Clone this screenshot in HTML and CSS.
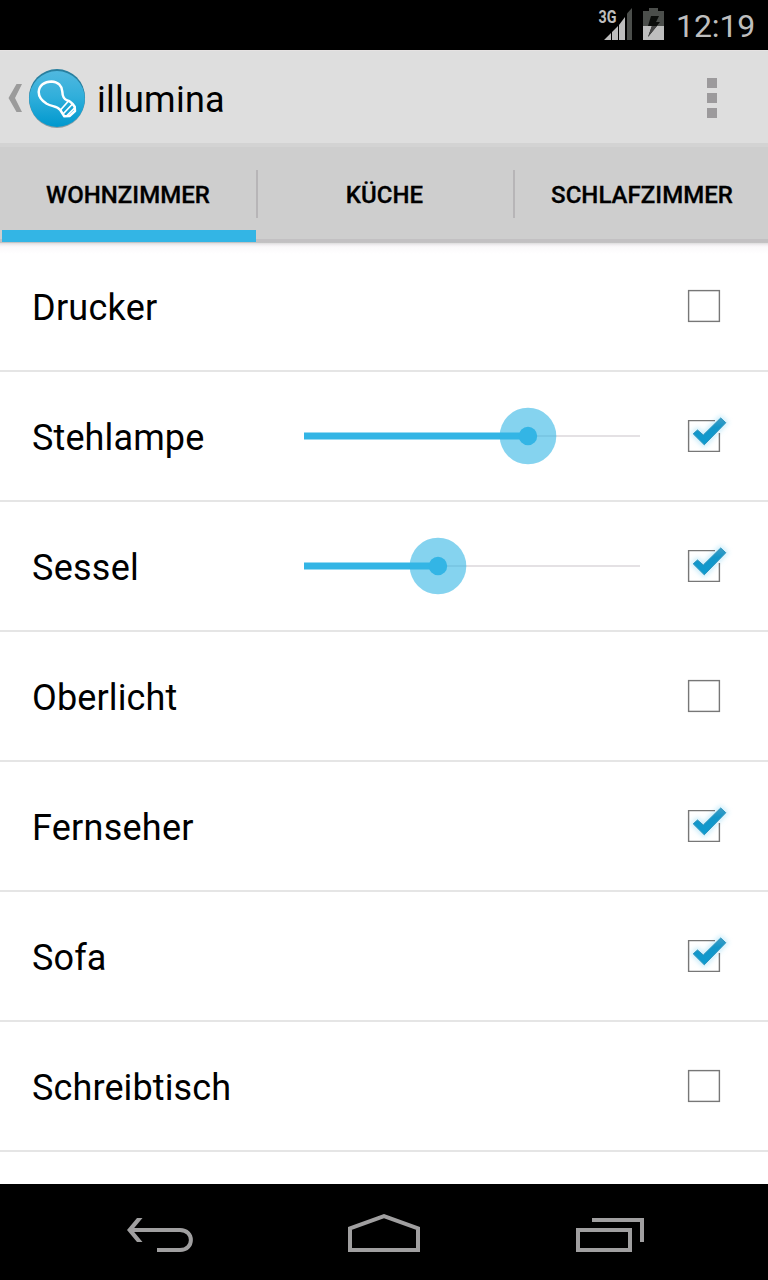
FILE: index.html
```html
<!DOCTYPE html>
<html lang="de">
<head>
<meta charset="utf-8">
<title>illumina</title>
<link rel="stylesheet" href="styles.css">
</head>
<body>
<svg width="0" height="0" class="defs">
  <defs>
    <linearGradient id="tick" x1="0" y1="0" x2="0" y2="1"><stop offset="0" stop-color="#3f9cc4"/><stop offset=".35" stop-color="#1295c8"/><stop offset="1" stop-color="#0d9bd0"/></linearGradient>
    <filter id="glow" x="-50%" y="-50%" width="200%" height="200%"><feGaussianBlur stdDeviation="2.6"/></filter>
    <symbol id="off" viewBox="0 0 80 72"><rect x="18.6" y="20.6" width="30.8" height="30.8" fill="none" stroke="#777" stroke-width="1.4"/></symbol>
    <symbol id="on" viewBox="0 0 80 72">
      <path d="M23 33.800L27.500 29.800L33.300 35L50.700 17.800L56 22.700L34.300 45Z" fill="#8fd8f5" stroke="#8fd8f5" stroke-width="4" opacity=".5" filter="url(#glow)"/>
      <path d="M45 20.600H18.600V51.400H49.400V33" fill="none" stroke="#777" stroke-width="1.4"/>
      <path d="M23.200 33.800L27.500 30L33.300 35L50.700 18L55.800 22.700L34.300 44.800Z" fill="url(#tick)" stroke="#2c94bd" stroke-width="1"/>
    </symbol>
  </defs>
</svg>
<div class="screen">
  <header class="status">
    <svg class="signal" width="36" height="34" viewBox="0 0 36 34">
      <path d="M27 7.500L32 2V34H27Z" fill="#4b4e4b"/>
      <path d="M4 34L11 27V34ZM12 26L18 20V34H12ZM19 19L25 11V34H19Z" fill="#bebebe"/>
      <text x="-1.500" y="17" class="net" textLength="18" lengthAdjust="spacingAndGlyphs">3G</text>
    </svg>
    <svg class="battery" width="22" height="32" viewBox="0 0 22 32">
      <path d="M6 0H15V3H21V18H0V3H6Z" fill="#4b4e4b"/>
      <path d="M0 18H21V32H0Z" fill="#bebebe"/>
      <path d="M8 8H16L13 14H17L5 29L9 18H5Z" fill="#0b0d0b"/>
      <path d="M8.800 18H14L5 29Z" fill="#454545"/>
    </svg>
    <span class="clock">12:19</span>
  </header>
  <div class="actionbar">
    <svg class="up" width="14" height="28" viewBox="0 0 14 28"><path d="M7.500 0H13L6 14L13 28H7.500L-.5 14Z" fill="#9b9b9b"/></svg>
    <svg class="logo" width="58" height="62" viewBox="0 0 58 62">
      <defs>
        <linearGradient id="disc" x1="0" y1="0" x2="0" y2="1"><stop offset="0" stop-color="#50b8df"/><stop offset=".45" stop-color="#31afdb"/><stop offset="1" stop-color="#0098ce"/></linearGradient>
      </defs>
      <ellipse cx="29" cy="31" rx="28" ry="29" fill="#8b9ca3"/>
      <ellipse cx="29" cy="29.500" rx="28" ry="28.500" fill="#287f9f"/>
      <ellipse cx="29" cy="31" rx="27.800" ry="28" fill="url(#disc)"/>
      <g fill="none" stroke="#fff" stroke-linejoin="round" stroke-linecap="round">
        <path d="M32.300 42C29 37.500 24 39 18.700 35.800C13.500 32.500 10.700 28 10.700 24C11 17.500 16.500 13.400 23.500 13.400C30 13.600 34 18 34.300 23.500C34.500 29 36 31.500 39.500 32.500C42.500 33.200 44.500 35.500 46.700 38.700L47 43L41.500 48L36.300 48.300Z" stroke-width="2.500"/>
        <path d="M32.500 42L40.500 33M35.500 45.500L44 36.500M39 47.500L46.500 40" stroke-width="1.700"/>
      </g>
    </svg>
    <h1 class="title">illumina</h1>
    <div class="overflow"><i></i><i></i><i></i></div>
  </div>
  <nav class="tabs">
    <div class="tab active"><span>WOHNZIMMER</span></div>
    <div class="tab"><span>KÜCHE</span></div>
    <div class="tab last"><span>SCHLAFZIMMER</span></div>
  </nav>
  <main class="list">
    <div class="row"><span class="name">Drucker</span><svg class="check"><use href="#off"/></svg></div>
    <div class="row"><span class="name tight">Stehlampe</span>
      <svg class="slider" width="336" height="60" viewBox="0 0 336 60"><path d="M0 30H336" stroke="#e4e1e4" stroke-width="2"/><path d="M0 30H224" stroke="#33b5e5" stroke-width="7"/><circle cx="224" cy="30" r="28.300" fill="#33b5e5" opacity=".6"/><circle cx="224" cy="30" r="9.200" fill="#33b5e5"/></svg>
      <svg class="check"><use href="#on"/></svg></div>
    <div class="row"><span class="name">Sessel</span>
      <svg class="slider" width="336" height="60" viewBox="0 0 336 60"><path d="M0 30H336" stroke="#e4e1e4" stroke-width="2"/><path d="M0 30H134" stroke="#33b5e5" stroke-width="7"/><circle cx="134" cy="30" r="28.300" fill="#33b5e5" opacity=".6"/><circle cx="134" cy="30" r="9.200" fill="#33b5e5"/></svg>
      <svg class="check"><use href="#on"/></svg></div>
    <div class="row"><span class="name tight">Oberlicht</span><svg class="check"><use href="#off"/></svg></div>
    <div class="row"><span class="name">Fernseher</span><svg class="check"><use href="#on"/></svg></div>
    <div class="row"><span class="name tight">Sofa</span><svg class="check"><use href="#on"/></svg></div>
    <div class="row"><span class="name tight">Schreibtisch</span><svg class="check"><use href="#off"/></svg></div>
  </main>
  <footer class="navbar">
    <svg width="100" height="70" viewBox="0 0 100 70"><path d="M20 30H70C84.500 30 84.500 50 70 50H47" fill="none" stroke="#a09fa0" stroke-width="4"/><path d="M27 18H32.500L22.500 30L32.500 42H27L17 30Z" fill="#a09fa0"/></svg>
    <svg width="110" height="70" viewBox="0 0 110 70"><path d="M20 50V28.400L54 16.200L88 28.400V50Z" fill="none" stroke="#a09fa0" stroke-width="4"/></svg>
    <svg width="100" height="70" viewBox="0 0 100 70"><path d="M18 30H70V50H18ZM32 20H82V42" fill="none" stroke="#a09fa0" stroke-width="4"/></svg>
  </footer>
</div>
</body>
</html>
```
FILE: styles.css
```css
* { box-sizing: border-box; }
body { margin: 0; background: #fff; font-family: Roboto, sans-serif; color: #000; }
.defs { position: absolute; }
.screen { width: 768px; height: 1280px; display: flex; flex-direction: column; overflow: hidden; }
.status { height: 50px; flex: none; background: #000; display: flex; align-items: flex-start; padding-left: 600px; }
.status svg { flex: none; overflow: visible; }
.signal { margin-top: 6px; }
.battery { margin: 8px 0 0 7px; }
.net { font: bold 18px Roboto, sans-serif; fill: #bebebe; stroke: #000; stroke-width: 1px; paint-order: stroke; }
.clock { color: #bebebe; font-size: 32px; line-height: 50px; margin-left: 11px; font-weight: 400; letter-spacing: -.1px; padding-top: 1px; }
.actionbar { height: 97px; flex: none; background: #dedede; border-top: 1px solid #e5e2e2; border-bottom: 4px solid #d3d3d3; display: flex; align-items: center; padding: 0 51px 0 9px; }
.up { margin-top: 2px; overflow: visible; }
.logo { margin: 3px 0 0 5px; }
.title { margin: 6px 0 0 11px; font-size: 36px; font-weight: 400; line-height: 48px; letter-spacing: .25px; }
.overflow { margin: 2px 0 0 auto; display: flex; flex-direction: column; gap: 5px; }
.overflow i { width: 10px; height: 10px; background: #9c9a9c; }
.tabs { height: 95px; flex: none; background: #cecece; border-bottom: 3px solid #c2c0c2; display: grid; grid-template-columns: 256px 257px 255px; }
.tab { position: relative; display: flex; justify-content: center; align-items: center; height: 95px; font-size: 24px; font-weight: 500; letter-spacing: .03px; -webkit-text-stroke: .3px #000; white-space: nowrap; }
.last { padding-left: 3px; }
.tab + .tab::before { content: ""; width: 2px; height: 48px; background: #b7b5b7; position: absolute; left: 0; top: 23px; }
.active::after { content: ""; position: absolute; left: 2px; right: 0; bottom: 0; height: 12px; background: #33b5e5; }
.list { flex: 1; overflow: hidden; background: linear-gradient(#aaa8aa 0, #ddd 1px, #f1eef1 3px, #fbf9fb 5px, #fff 12px); }
.row { height: 130px; border-bottom: 2px solid #e5e5e5; display: flex; align-items: center; padding: 0 18px 0 32px; }
.name { font-size: 36px; line-height: 48px; width: 272px; padding-top: 3px; letter-spacing: .25px; }
.tight { letter-spacing: .12px; }
.check { width: 80px; height: 72px; margin-left: auto; }
.navbar { height: 96px; flex: none; background: #000; display: flex; align-items: flex-start; padding: 16px 108px 0 110px; justify-content: space-between; }
```
